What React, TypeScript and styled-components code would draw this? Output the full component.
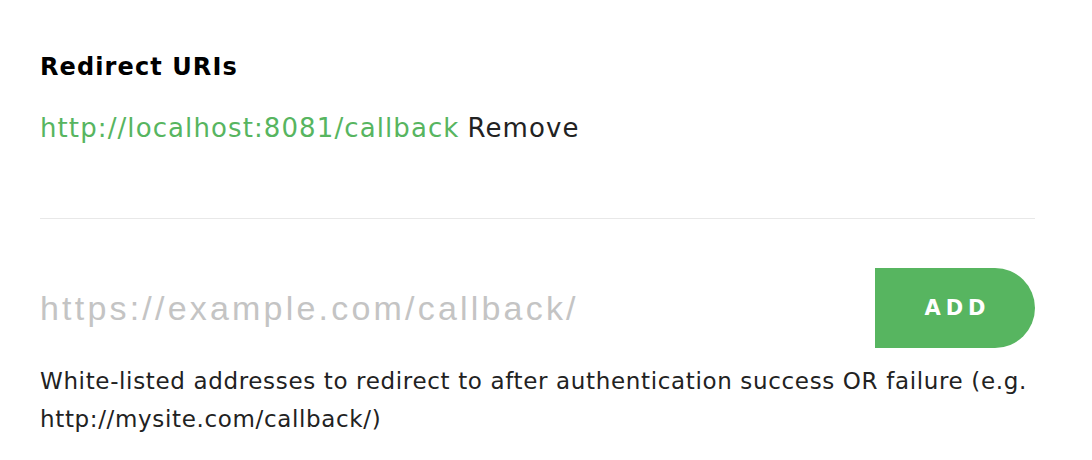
import React from "react";
import styled, { createGlobalStyle } from "styled-components";

const Global = createGlobalStyle`
  html, body { margin: 0; padding: 0; background: #fff; }
  body { font-family: "DejaVu Sans", sans-serif; }
`;

const Page = styled.div`
  width: 1092px;
  box-sizing: border-box;
  padding: 52px 57px 0 40px;
`;

const Heading = styled.h2`
  margin: 0;
  font-size: 24px;
  line-height: 30px;
  font-weight: 700;
  letter-spacing: 1.1px;
  color: #000;
`;

const UriRow = styled.div`
  margin-top: 28px;
  font-size: 26px;
  line-height: 36px;
  letter-spacing: 1.1px;
  color: #222;
  padding-bottom: 72px;
  border-bottom: 1px solid #e8e8e8;
`;

const UriLink = styled.span`
  color: #57b560;
`;

const RemoveLink = styled.span`
  color: #222;
  margin-left: 8px;
`;

const AddRow = styled.div`
  display: flex;
  align-items: center;
  justify-content: space-between;
  margin-top: 49px;
`;

const UrlInput = styled.input`
  flex: 1;
  border: none;
  outline: none;
  font-family: "Liberation Sans", Arial, sans-serif;
  font-size: 34px;
  letter-spacing: 3.2px;
  color: #333;
  padding: 0;
  background: transparent;
  &::placeholder { color: #c4c4c4; }
`;

const AddButton = styled.button`
  width: 160px;
  height: 80px;
  border: none;
  background: #57b560;
  color: #fff;
  border-radius: 0 40px 40px 0;
  font-family: "DejaVu Sans", sans-serif;
  font-weight: 700;
  font-size: 21px;
  letter-spacing: 5px;
  padding: 0 0 0 5px;
`;

const Hint = styled.p`
  margin: 14px 0 0;
  font-size: 23px;
  line-height: 38px;
  letter-spacing: 0.65px;
  color: #222;
`;

export default function App() {
  return (
    <Page>
      <Global />
      <Heading>Redirect URIs</Heading>
      <UriRow>
        <UriLink>http://localhost:8081/callback</UriLink>
        <RemoveLink>Remove</RemoveLink>
      </UriRow>
      <AddRow>
        <UrlInput placeholder="https://example.com/callback/" />
        <AddButton>ADD</AddButton>
      </AddRow>
      <Hint>
        White-listed addresses to redirect to after authentication success OR failure (e.g.
        http://mysite.com/callback/)
      </Hint>
    </Page>
  );
}
